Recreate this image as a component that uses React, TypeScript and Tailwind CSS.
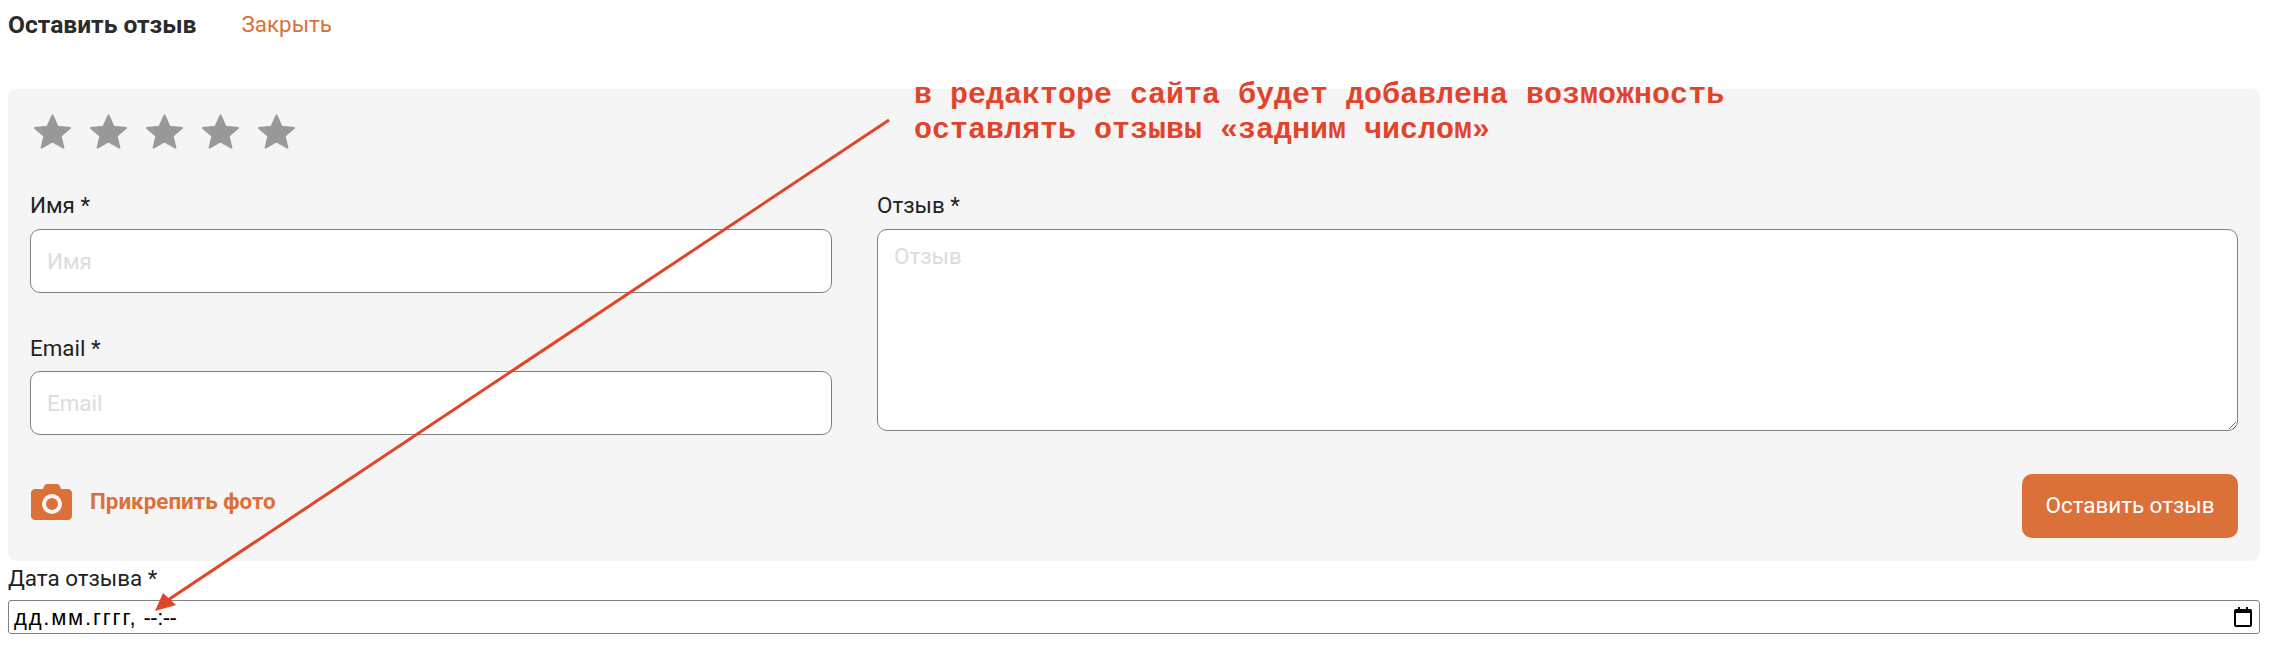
import React from "react";

const roboto = "font-['Roboto',sans-serif]";

function Star() {
  return (
    <svg width="39" height="35" viewBox="0 0 39 35" className="block">
      <path
        d="M19.5 1.5 L24.6 12.8 L37 13.9 L27.6 22 L30.4 33.6 L19.5 27.5 L8.6 33.6 L11.4 22 L2 13.9 L14.4 12.8 Z"
        fill="#999999"
        stroke="#999999"
        strokeWidth="2"
        strokeLinejoin="round"
      />
    </svg>
  );
}

function Camera() {
  return (
    <svg width="41" height="36" viewBox="0 0 41 36" className="block shrink-0">
      <path
        d="M4 5h8l1-2.500C13.500 1 14.500 0 16 0h10c1.500 0 2.500 1 3 2.500L30 5h7c2.200 0 4 1.800 4 4v23c0 2.200-1.800 4-4 4H4c-2.200 0-4-1.800-4-4V9c0-2.200 1.800-4 4-4z"
        fill="#DC7039"
      />
      <circle cx="21" cy="20" r="8" fill="none" stroke="#F5F5F5" strokeWidth="4" />
    </svg>
  );
}

function Field({ label, placeholder, className }: { label: string; placeholder: string; className?: string }) {
  return (
    <div className={className}>
      <label className="block h-6 text-[22.4px] leading-[25px] text-[#222]">{label}</label>
      <input
        placeholder={placeholder}
        className="mt-3 block h-16 w-full rounded-[10px] border border-[#808080] bg-white px-4 text-[22.4px] outline-none placeholder:text-[#dcdcdc]"
      />
    </div>
  );
}

export default function App() {
  return (
    <div className={`relative h-[668px] w-[2284px] overflow-hidden bg-white ${roboto}`}>
      <div className="flex h-[50px] items-center gap-[45px] pl-2">
        <span className="text-[24.6px] font-bold text-[#2b2b2b]">Оставить отзыв</span>
        <span className="text-[22.4px] text-[#DC7039]">Закрыть</span>
      </div>

      <div className="mt-[39px] ml-2 h-[472px] w-[2252px] rounded-lg bg-[#f5f5f5] pt-[25px] pr-[22px] pl-[22px]">
        <div className="ml-[3px] flex gap-[17px]">
          <Star />
          <Star />
          <Star />
          <Star />
          <Star />
        </div>

        <div className="mt-11 flex items-start gap-[45px]">
          <div className="w-[802px] shrink-0">
            <Field label="Имя *" placeholder="Имя" />
            <Field label="Email *" placeholder="Email" className="mt-[43px] [&_input]:mt-[11px]" />
          </div>
          <div className="flex-1">
            <label className="block h-6 text-[22.4px] leading-[25px] text-[#222]">Отзыв *</label>
            <textarea
              placeholder="Отзыв"
              className="mt-3 block h-[202px] w-full rounded-[10px] border border-[#808080] bg-white px-4 pt-[14px] text-[22.4px] leading-6 outline-none placeholder:text-[#dcdcdc]"
            />
          </div>
        </div>

        <div className="mt-[39px] flex items-center justify-between">
          <div className="mb-[9px] flex items-center gap-[18px] pl-px">
            <Camera />
            <span className="text-[22.4px] font-bold text-[#DC7039]">Прикрепить фото</span>
          </div>
          <button className="h-16 w-[216px] rounded-[10px] bg-[#DC7039] text-[22.4px] text-white">
            Оставить отзыв
          </button>
        </div>
      </div>

      <label className="mt-[5px] block h-6 pl-2 text-[22.4px] leading-6 text-[#222]">Дата отзыва *</label>
      <div className="mt-[10px] ml-2 flex h-[34px] w-[2252px] items-center justify-between rounded-[3px] border border-[#808080] bg-white pr-[7px] pl-[5px]">
        <span className="flex gap-[6px] font-['Liberation_Sans',sans-serif] text-[22px] text-black">
          <span className="tracking-[1.8px]">дд.мм.гггг,</span>
          <span className="tracking-[-0.5px]">--:--</span>
        </span>
        <svg width="18" height="20" viewBox="0 0 18 20" className="block">
          <path d="M4 0h2v2h6V0h2v2h2a2 2 0 0 1 2 2v14a2 2 0 0 1-2 2H2a2 2 0 0 1-2-2V4a2 2 0 0 1 2-2h2z" fill="#000" />
          <rect x="2" y="6" width="14" height="12" fill="#fff" />
        </svg>
      </div>

      <svg width="2284" height="668" viewBox="0 0 2284 668" className="pointer-events-none absolute top-0 left-0">
        <line x1="889" y1="120" x2="168" y2="600" stroke="#E2442B" strokeWidth="3" />
        <polygon points="155,611 163,593 176,605" fill="#E2442B" />
      </svg>

      <div className="absolute top-[78px] left-[914px] font-['Liberation_Mono',monospace] text-[30px] leading-[35px] font-bold whitespace-pre text-[#E2442B]">
        {"в редакторе сайта будет добавлена возможность\nоставлять отзывы «задним числом»"}
      </div>
    </div>
  );
}
